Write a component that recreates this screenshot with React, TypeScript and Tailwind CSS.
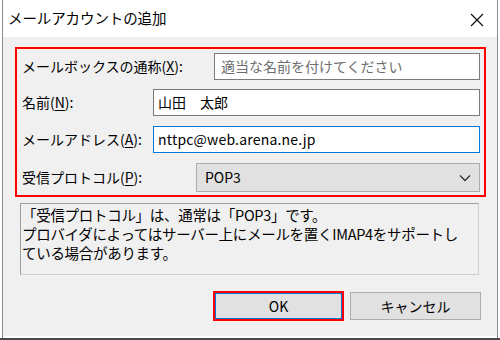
import React from "react";

const font = "font-['Noto_Sans_CJK_JP','Noto_Sans',sans-serif]";

function Mn({ k }: { k: string }) {
  return (
    <>
      (<span className="underline underline-offset-2">{k}</span>):
    </>
  );
}

export default function App() {
  return (
    <div className={`w-[500px] h-[340px] bg-white flex flex-col text-black ${font}`}>
      <div className="flex-1 mx-[2px] border-x border-[#8c8c8c] flex flex-col">
        {/* Title bar */}
        <div className="h-[37px] bg-white flex items-center justify-between pl-[5px] pr-[13px] shrink-0">
          <span className="text-[14.5px] leading-none tracking-[-0.1px]">メールアカウントの追加</span>
          <svg width="14" height="14" viewBox="0 0 14 14" className="mt-[2px]">
            <path d="M1 1L13 13M13 1L1 13" stroke="#111" strokeWidth="1.2" />
          </svg>
        </div>

        {/* Client area */}
        <div className="flex-1 bg-[#f0f0f0] flex flex-col pl-[12px] pt-[10px]">
          <div className="w-[471px] h-[150px] border-2 border-[#ff0000] flex flex-col pt-[4px] pr-[4px] text-[14px]">
            <div className="flex items-center h-[27px]">
              <span className="flex-1 pl-[5px] whitespace-nowrap">
                メールボックスの通称<Mn k="X" />
              </span>
              <div className="w-[266px] h-[27px] bg-white border border-[#7a7a7a] flex items-center px-[6px] text-[#6d6d6d]">
                適当な名前を付けてください
              </div>
            </div>
            <div className="flex items-center h-[27px] mt-[9px]">
              <span className="flex-1 pl-[5px] whitespace-nowrap">
                名前<Mn k="N" />
              </span>
              <div className="w-[327px] h-[27px] bg-white border border-[#7a7a7a] flex items-center px-[4px]">
                山田　太郎
              </div>
            </div>
            <div className="flex items-center h-[27px] mt-[10px]">
              <span className="flex-1 pl-[5px] whitespace-nowrap">
                メールアドレス<Mn k="A" />
              </span>
              <div className="w-[327px] h-[27px] bg-white border border-[#0078d7] flex items-center px-[4px] tracking-[0.2px]">
                nttpc@web.arena.ne.jp
              </div>
            </div>
            <div className="flex items-center h-[29px] mt-[10px]">
              <span className="flex-1 pl-[5px] whitespace-nowrap">
                受信プロトコル<Mn k="P" />
              </span>
              <div className="w-[284px] h-[29px] bg-[#e1e1e1] border border-[#adadad] flex items-center justify-between pl-[8px] pr-[8px]">
                <span>POP3</span>
                <svg width="12" height="8" viewBox="0 0 12 8">
                  <path d="M1 1.5L6 6.5L11 1.5" fill="none" stroke="#333" strokeWidth="1.3" />
                </svg>
              </div>
            </div>
          </div>

          <div className="ml-[5px] mt-[6px] w-[459px] h-[72px] border border-[#cfcfcf] border-t-[#a0a0a0] border-l-[#a0a0a0] px-[1px] pt-[1px] text-[14.5px] leading-[19px] whitespace-nowrap tracking-[-0.3px]">
            <div>「受信プロトコル」は、通常は「POP3」です。</div>
            <div>プロバイダによってはサーバー上にメールを置くIMAP4をサポートし</div>
            <div>ている場合があります。</div>
          </div>

          <div className="flex justify-end items-center gap-[6px] mt-[16px] pr-[16px] text-[14px]">
            <div className="w-[131px] h-[30px] border-2 border-[#ff0000]">
              <div className="w-full h-full bg-[#e1e1e1] border border-[#0078d7] flex items-center justify-center">
                OK
              </div>
            </div>
            <div className="w-[131px] h-[28px] bg-[#e1e1e1] border border-[#adadad] flex items-center justify-center">
              キャンセル
            </div>
          </div>
        </div>
        <div className="h-[2px] bg-white shrink-0" />
      </div>
      <div className="h-[2px] bg-[#4a4a4a] shrink-0" />
    </div>
  );
}
